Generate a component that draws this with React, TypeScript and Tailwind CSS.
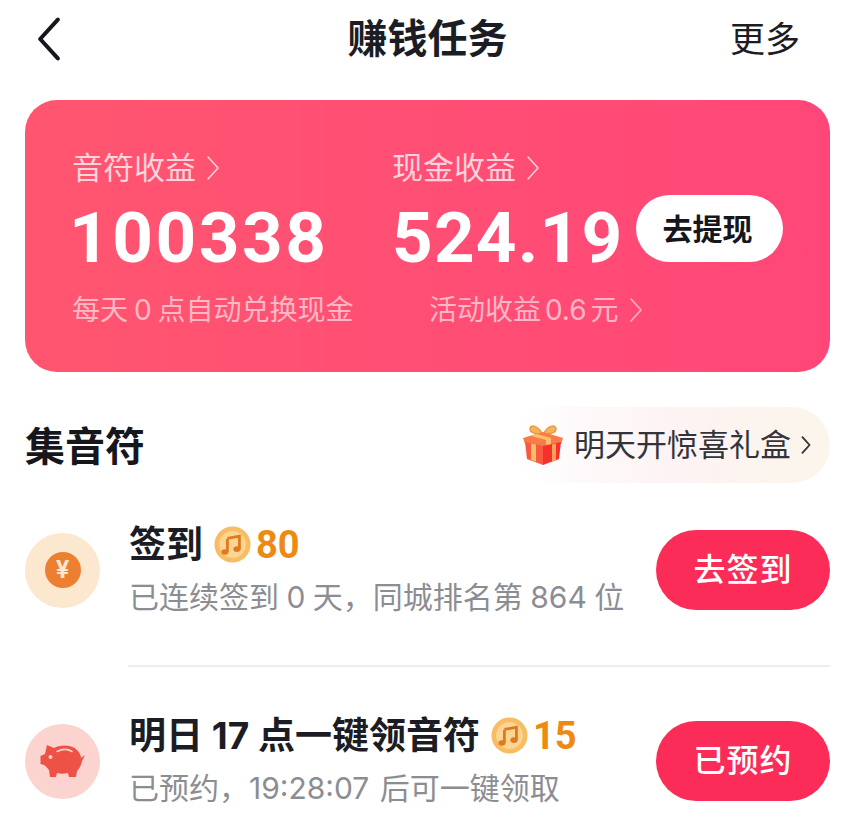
const cjk = "font-['Inter','Noto_Sans_CJK_SC',sans-serif]"

function Chevron({ className, stroke = 2, back = false }: { className: string; stroke?: number; back?: boolean }) {
  return (
    <svg viewBox="0 0 14 26" className={className} fill="none" stroke="currentColor" strokeWidth={stroke} strokeLinecap="round" strokeLinejoin="round">
      <path d={back ? 'M12 2 L2 13 L12 24' : 'M2 2 L12 13 L2 24'} />
    </svg>
  )
}

function Coin({ size }: { size: string }) {
  return (
    <svg viewBox="0 0 40 40" className={size}>
      <circle cx="20" cy="20" r="19.5" fill="#f8bd62" />
      <circle cx="20" cy="20" r="14.5" fill="#fbd591" />
      <path d="M14.5 13.5 L27.5 11 V25" fill="none" stroke="#e0781f" strokeWidth="3" />
      <path d="M14.5 14 V28" fill="none" stroke="#e0781f" strokeWidth="3" />
      <ellipse cx="11.8" cy="28" rx="3.8" ry="3" fill="#e0781f" />
      <ellipse cx="24.8" cy="25" rx="3.8" ry="3" fill="#e0781f" />
    </svg>
  )
}

function Gift() {
  return (
    <svg viewBox="0 0 42 42" className="w-[42px] h-[42px]">
      <path d="M20 9 C14 0 8 1 8 5 C8 9 14 10 20 10 Z" fill="#f5b45c" stroke="#ee9a3c" strokeWidth="1.5" />
      <path d="M22 9 C27 0 34 1 34 5 C34 9 28 10 22 10 Z" fill="#f5b45c" stroke="#ee9a3c" strokeWidth="1.5" />
      <path d="M1 14 L21 8 L41 14 L39 20 L21 23 L3 20 Z" fill="#fb7a4c" />
      <path d="M3 18 L21 22 V41 L5 35 Z" fill="#f9593f" />
      <path d="M39 18 L21 22 V41 L37 35 Z" fill="#f8302c" />
      <path d="M9 12 L15 10 L29 14 V20 L24 21 V16 Z" fill="#f9c06a" />
      <path d="M9 19.5 L14 20.5 V37.5 L9 36 Z" fill="#f9c06a" />
      <path d="M30 20.5 L34 19.5 V36 L30 37.5 Z" fill="#f9a35a" />
    </svg>
  )
}

function Pig() {
  return (
    <svg viewBox="0 0 46 34" className="w-[46px] h-[34px]">
      <path
        d="M7 1 L14 4 C19 1 31 0 37 6 C40 9 41 12 41 14 L45 11 L42 17 C41 22 39 25 37 27 L36 33 H29 L28 29 C24 30 20 30 17 29 L16 33 H10 L9 26 C7 24 6 22 4 21 L0.5 20 V12 L5 10 Z"
        fill="#ee5145"
      />
      <circle cx="10.5" cy="13" r="2" fill="#fbd3cf" />
      <path d="M17 7.5 C22 5 28 5 32 7.5" fill="none" stroke="#fbd3cf" strokeWidth="1.6" strokeLinecap="round" />
    </svg>
  )
}

function TaskRow({
  icon,
  iconBg,
  title,
  reward,
  desc,
  action,
}: {
  icon: React.ReactNode
  iconBg: string
  title: React.ReactNode
  reward: string
  desc: React.ReactNode
  action: string
}) {
  return (
    <div className="flex items-center h-[80px]">
      <div className={`w-[75px] h-[75px] rounded-full flex items-center justify-center shrink-0 ${iconBg}`}>
        {icon}
      </div>
      <div className="ml-[29px] flex-1 min-w-0 mt-[1px]">
        <div className="flex items-center h-[40px]">
          <span className="text-[37px] leading-none font-bold text-[#1c1d24] whitespace-nowrap">{title}</span>
          <span className="ml-[11px] flex items-center gap-[5px]">
            <Coin size="w-[37px] h-[37px]" />
            <span className="text-[38px] leading-none font-bold text-[#ee8a12] font-['Roboto',sans-serif]">{reward}</span>
          </span>
        </div>
        <div className="mt-[12px] text-[30px] leading-[40px] text-[#8c8d92] whitespace-nowrap">{desc}</div>
      </div>
      <button className="w-[174px] h-[80px] rounded-full bg-[#fb2c57] text-white text-[32px] font-medium tracking-[1px] shrink-0">
        {action}
      </button>
    </div>
  )
}

export default function App() {
  return (
    <div className={`w-[861px] h-[834px] overflow-hidden bg-white ${cjk}`}>
      <div className="relative flex items-center justify-center h-[80px] pr-[6px]">
        <Chevron back className="absolute left-[36px] top-[16px] w-[26px] h-[46px] text-[#16171c]" stroke={2.3} />
        <h1 className="text-[40px] font-bold text-[#1c1d24] leading-none -mt-[2px]">赚钱任务</h1>
        <span className="absolute left-[730px] top-[19px] text-[35px] leading-[40px] text-[#1c1d24]">更多</span>
      </div>

      <div className="ml-[25px] mr-[31px] mt-[20px] h-[272px] rounded-[32px] bg-gradient-to-r from-[#ff5670] to-[#ff4678] pl-[47px] pt-[50px] text-white">
        <div className="flex h-[36px] items-center text-[31px] text-white/75">
          <span className="w-[320px] flex items-center">
            音符收益
            <Chevron className="w-[14px] h-[26px] ml-[10px]" stroke={1.6} />
          </span>
          <span className="flex items-center">
            现金收益
            <Chevron className="w-[14px] h-[26px] ml-[10px]" stroke={1.6} />
          </span>
        </div>
        <div className="flex items-center h-[70px] mt-[16px] text-[71px] font-bold font-['Roboto',sans-serif] leading-none tracking-[2.5px]">
          <span className="w-[323px] -ml-[3px]">100338</span>
          <span className="w-[244px] tracking-[1.2px]">524.19</span>
          <button className="w-[147px] h-[67px] -mt-[17px] rounded-full bg-white text-[#16171c] text-[30px] font-bold tracking-normal font-['Noto_Sans_CJK_SC',sans-serif] pr-[4px] pb-[3px]">
            去提现
          </button>
        </div>
        <div className="flex items-center h-[36px] mt-[20px] text-[28px] text-white/60">
          <span className="w-[357px] [word-spacing:-2px]">每天 0 点自动兑换现金</span>
          <span className="flex items-center [word-spacing:-4px]">
            活动收益 0.6 元
            <Chevron className="w-[14px] h-[26px] ml-[11px]" stroke={1.6} />
          </span>
        </div>
      </div>

      <div className="flex items-center justify-between ml-[25px] mr-[31px] mt-[35px] h-[76px]">
        <h2 className="text-[40px] font-bold text-[#16171c] mt-[4px]">集音符</h2>
        <div className="flex items-center h-[76px] w-[320px] pl-[12px] rounded-full bg-gradient-to-r from-white via-[#fdf3f4] to-[#fbf5ea]">
          <Gift />
          <span className="ml-[10px] text-[31px] text-[#33343a] whitespace-nowrap">明天开惊喜礼盒</span>
          <Chevron className="w-[10px] h-[20px] ml-[10px] text-[#33343a]" stroke={2.6} />
        </div>
      </div>

      <div className="ml-[25px] mr-[31px] mt-[47px]">
        <TaskRow
          iconBg="bg-[#fce7cf]"
          icon={
            <div className="w-[36px] h-[36px] rounded-full bg-[#ec8030] flex items-center justify-center text-[24px] font-bold text-[#fce7cf]">
              ¥
            </div>
          }
          title="签到"
          reward="80"
          desc={<span className="[word-spacing:-1px]">已连续签到 0 天，同城排名第 864 位</span>}
          action="去签到"
        />
        <div className="ml-[103px] mt-[55px] mb-[54px] h-[2px] bg-[#eeeeee]" />
        <TaskRow
          iconBg="bg-[#fbd3cf]"
          icon={<Pig />}
          title={<span>明日 17 点一键领音符</span>}
          reward="15"
          desc={<span className="[word-spacing:2px]">已预约，19:28:07 后可一键领取</span>}
          action="已预约"
        />
      </div>
    </div>
  )
}
